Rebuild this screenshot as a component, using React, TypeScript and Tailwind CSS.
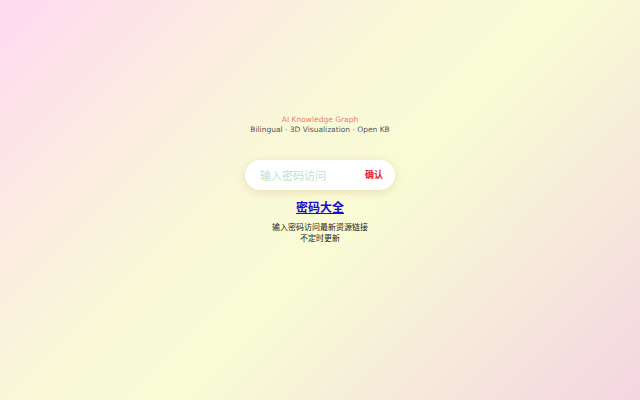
import React from "react";

export default function App() {
  return (
    <div className="w-[640px] h-[400px] flex flex-col items-center bg-[linear-gradient(135deg,#ffd9f0_0%,#f9f8d8_40%,#f8fcd4_55%,#f4d5e2_100%)] font-['Noto_Sans_CJK_SC',sans-serif]">
      <div className="mt-[115px] flex flex-col items-center font-['DejaVu_Sans','Noto_Sans_CJK_SC',sans-serif] text-[7.5px] leading-[10px]">
        <div className="text-[#f07878]">AI Knowledge Graph</div>
        <div className="text-[#555555]">Bilingual · 3D Visualization · Open KB</div>
      </div>
      <div className="mt-[25px] w-[150px] h-[30px] rounded-full bg-white shadow-[0_2px_10px_rgba(200,170,120,0.35)] flex items-center pl-[15px] pr-[12px]">
        <span className="flex-1 text-[11px] text-[#bddfd0]">输入密码访问</span>
        <span className="text-[9px] font-bold text-[#e8202a]">确认</span>
      </div>
      <a href="#" className="mt-[8px] text-[12px] leading-[18px] font-bold text-[#1a0dcc] underline">
        密码大全
      </a>
      <div className="mt-[5px] flex flex-col items-center text-[8px] leading-[11px] text-[#222222]">
        <div>输入密码访问最新资源链接</div>
        <div>不定时更新</div>
      </div>
    </div>
  );
}
